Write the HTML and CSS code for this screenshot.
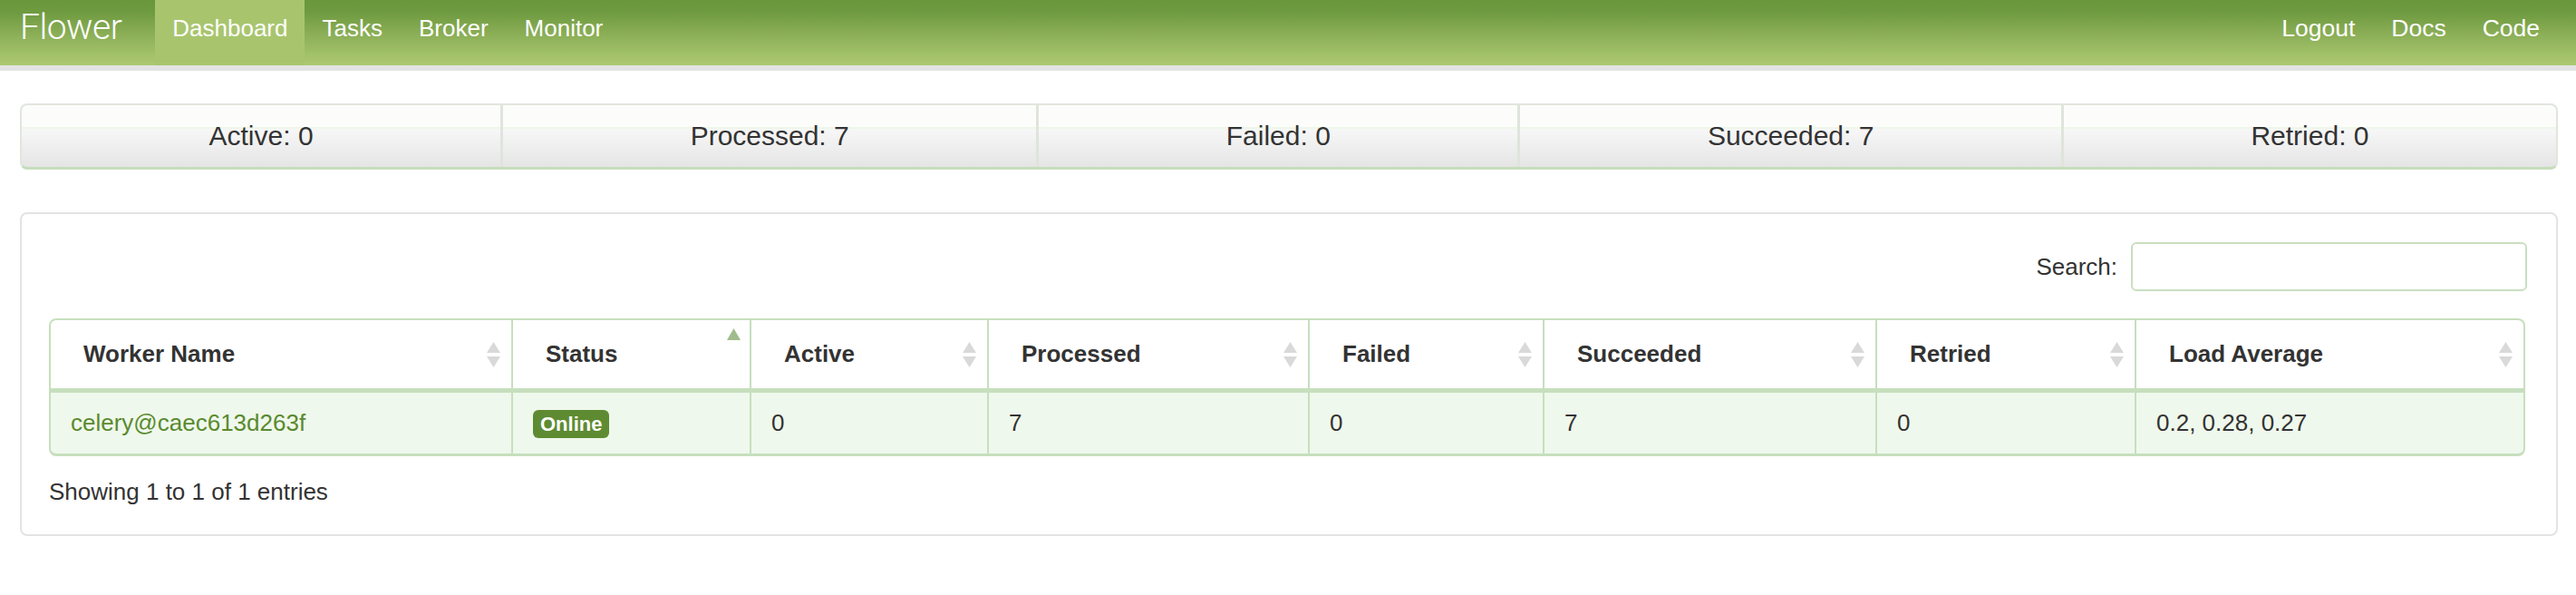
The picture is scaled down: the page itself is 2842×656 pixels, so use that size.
FILE: index.html
```html
<!DOCTYPE html>
<html>
<head>
<meta charset="utf-8">
<title>Flower</title>
<link rel="stylesheet" href="styles.css">
</head>
<body>
<nav class="navbar">
  <a class="brand" href="#">Flower</a>
  <ul class="nav">
    <li class="active"><a href="#">Dashboard</a></li>
    <li><a href="#">Tasks</a></li>
    <li><a href="#">Broker</a></li>
    <li><a href="#">Monitor</a></li>
  </ul>
  <ul class="nav nav-right">
    <li><a href="#">Logout</a></li>
    <li><a href="#">Docs</a></li>
    <li><a href="#">Code</a></li>
  </ul>
</nav>

<div class="stats">
  <div class="stat">Active: 0</div>
  <div class="stat">Processed: 7</div>
  <div class="stat">Failed: 0</div>
  <div class="stat">Succeeded: 7</div>
  <div class="stat">Retried: 0</div>
</div>

<div class="panel">
  <div class="filter">
    <label for="search">Search:</label>
    <input id="search" type="search">
  </div>
  <table class="workers">
    <colgroup>
      <col class="c-name"><col class="c-status"><col class="c-active"><col class="c-processed">
      <col class="c-failed"><col class="c-succeeded"><col class="c-retried"><col class="c-load">
    </colgroup>
    <thead>
      <tr>
        <th><div class="th-inner"><span>Worker Name</span><svg class="sort" viewBox="0 0 15 28"><path d="M7.5 0 L15 12 H0 Z M0 16 H15 L7.5 28 Z"/></svg></div></th>
        <th><div class="th-inner"><span>Status</span><svg class="sort asc" viewBox="0 0 15 13"><path d="M7.5 0 L15 13 H0 Z"/></svg></div></th>
        <th><div class="th-inner"><span>Active</span><svg class="sort" viewBox="0 0 15 28"><path d="M7.5 0 L15 12 H0 Z M0 16 H15 L7.5 28 Z"/></svg></div></th>
        <th><div class="th-inner"><span>Processed</span><svg class="sort" viewBox="0 0 15 28"><path d="M7.5 0 L15 12 H0 Z M0 16 H15 L7.5 28 Z"/></svg></div></th>
        <th><div class="th-inner"><span>Failed</span><svg class="sort" viewBox="0 0 15 28"><path d="M7.5 0 L15 12 H0 Z M0 16 H15 L7.5 28 Z"/></svg></div></th>
        <th><div class="th-inner"><span>Succeeded</span><svg class="sort" viewBox="0 0 15 28"><path d="M7.5 0 L15 12 H0 Z M0 16 H15 L7.5 28 Z"/></svg></div></th>
        <th><div class="th-inner"><span>Retried</span><svg class="sort" viewBox="0 0 15 28"><path d="M7.5 0 L15 12 H0 Z M0 16 H15 L7.5 28 Z"/></svg></div></th>
        <th><div class="th-inner"><span>Load Average</span><svg class="sort" viewBox="0 0 15 28"><path d="M7.5 0 L15 12 H0 Z M0 16 H15 L7.5 28 Z"/></svg></div></th>
      </tr>
    </thead>
    <tbody>
      <tr>
        <td><a class="worker" href="#">celery@caec613d263f</a></td>
        <td><span class="badge">Online</span></td>
        <td>0</td>
        <td>7</td>
        <td>0</td>
        <td>7</td>
        <td>0</td>
        <td>0.2, 0.28, 0.27</td>
      </tr>
    </tbody>
  </table>
  <div class="info">Showing 1 to 1 of 1 entries</div>
</div>
</body>
</html>
```
FILE: styles.css
```css
* { box-sizing: border-box; }

body {
  margin: 0;
  font-family: "Liberation Sans", Arial, sans-serif;
  font-size: 26px;
  color: #333;
  background: #fff;
}

a { text-decoration: none; }

/* Navbar */
.navbar {
  display: flex;
  align-items: stretch;
  height: 78px;
  background: linear-gradient(to bottom, #6a963c 0, #6e9a40 18%, #89ad55 50%, #a3c26a 85%, #acc870 100%);
  border-bottom: 6px solid #e3e3e3;
}

.brand {
  font-family: "Roboto", "Liberation Sans", sans-serif;
  font-weight: 300;
  font-size: 39px;
  color: #fff;
  line-height: 60px;
  margin-left: 22px;
  margin-right: 37px;
  letter-spacing: -0.5px;
}

.nav {
  list-style: none;
  margin: 0;
  padding: 0;
  display: flex;
}

.nav-right {
  margin-left: auto;
  margin-right: 20px;
}

.nav li a {
  display: block;
  height: 72px;
  line-height: 62px;
  padding: 0 20px;
  font-size: 26px;
  color: #fff;
}

.nav-right li a { font-size: 26.5px; }

.nav li:nth-child(1) a { padding: 0 18px 0 19px; }
.nav-right li:nth-child(1) a { padding: 0 20px; }

.nav li.active a {
  background: #a8c56e;
}

/* Stats */
.stats {
  display: flex;
  margin: 36px 20px 0 22px;
  height: 73px;
  border: 2px solid #e1e6dd;
  border-bottom: 3px solid #c6ddbc;
  border-radius: 8px;
  overflow: hidden;
  background: linear-gradient(to bottom, #fcfdfb 0, #fcfdfb 24px, #eef7ea 24px, #eef7ea 26px, #f7f7f7 26px, #e5e5e5 100%);
}

.stat {
  flex: 1 1 auto;
  display: flex;
  align-items: center;
  justify-content: center;
  font-size: 30px;
  color: #333;
  border-left: 3px solid #dfe4dc;
}

.stat:first-child { border-left: none; }

/* Panel */
.panel {
  margin: 47px 20px 0 22px;
  height: 357px;
  border: 2px solid #e3e3e3;
  border-radius: 8px;
  padding: 31px 34px 0 30px;
}

.filter {
  display: flex;
  justify-content: flex-end;
  align-items: center;
  gap: 15px;
  margin-right: -2px;
}

.filter label { font-size: 26px; }

.filter input {
  width: 437px;
  height: 54px;
  border: 2px solid #c9dfc0;
  border-radius: 6px;
  background: #fff;
  font-size: 26px;
}

.workers {
  margin-top: 30px;
  width: 2732px;
  table-layout: fixed;
  border-collapse: separate;
  border-spacing: 0;
}

.c-name { width: 512px; }
.c-status { width: 263px; }
.c-active { width: 262px; }
.c-processed { width: 354px; }
.c-failed { width: 259px; }
.c-succeeded { width: 367px; }
.c-retried { width: 286px; }
.c-load { width: 429px; }

.workers th {
  height: 82px;
  padding: 0 12px 0 36px;
  text-align: left;
  font-weight: bold;
  font-size: 26px;
  color: #333;
  background: #fff;
  border-top: 2px solid #c6dfbd;
  border-bottom: 5px solid #c6dfbd;
  border-right: 2px solid #c6dfbd;
}

.workers th:first-child {
  border-left: 2px solid #c6dfbd;
  border-top-left-radius: 8px;
}

.workers th:last-child {
  border-top-right-radius: 8px;
}

.th-inner {
  display: flex;
  justify-content: space-between;
  align-items: center;
}

.sort {
  width: 15px;
  height: 28px;
  fill: #d9d9d9;
  flex: none;
}

.sort.asc {
  height: 13px;
  fill: #9fbc8c;
  align-self: flex-start;
  margin-top: -13px;
  margin-right: -2px;
}

.workers td {
  height: 70px;
  padding: 0 22px;
  background: #eff8ec;
  font-size: 26px;
  color: #333;
  border-right: 2px solid #c6dfbd;
  border-bottom: 3px solid #c6dfbd;
}

.workers td:first-child {
  border-left: 2px solid #c6dfbd;
  border-bottom-left-radius: 8px;
}

.workers td:last-child {
  border-bottom-right-radius: 8px;
}

.worker { color: #5a8a2e; }

.badge {
  display: inline-block;
  height: 31px;
  line-height: 31px;
  padding: 0 8px;
  border-radius: 6px;
  background: #5e8b32;
  color: #fff;
  font-weight: bold;
  font-size: 22px;
  vertical-align: middle;
}

.info {
  margin-top: 24px;
  font-size: 26px;
  line-height: 30px;
}
```
